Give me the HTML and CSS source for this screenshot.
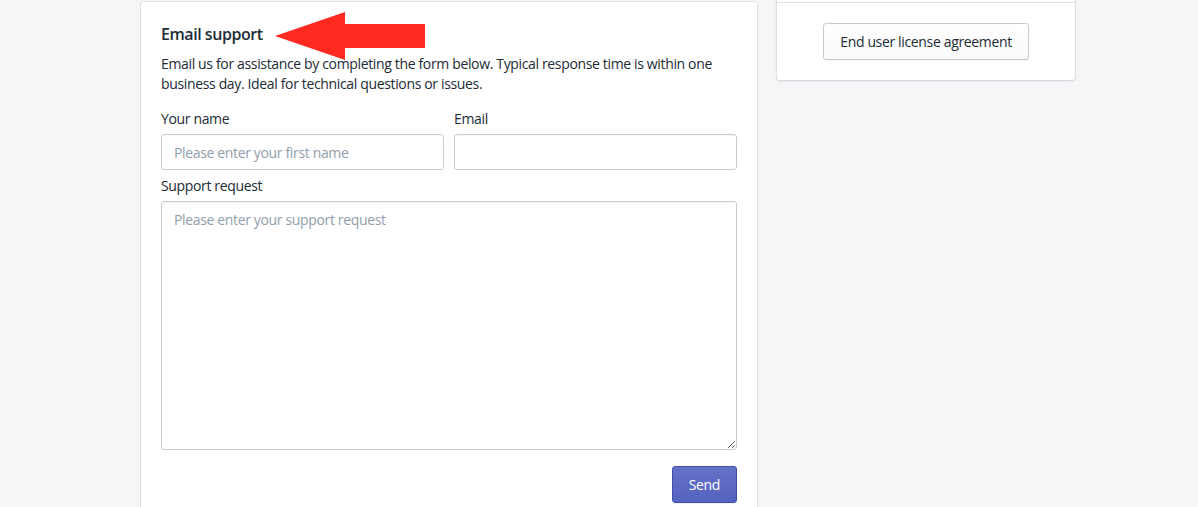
FILE: index.html
```html
<!DOCTYPE html>
<html>
<head>
<meta charset="utf-8">
<link rel="stylesheet" href="styles.css">
</head>
<body>
<div class="page">
  <div class="main-col">
    <section class="card form-card">
      <h2 class="card-title">Email support</h2>
      <p class="desc">Email us for assistance by completing the form below. Typical response time is within one business day. Ideal for technical questions or issues.</p>
      <div class="row">
        <div class="field">
          <label class="label">Your name</label>
          <input class="input" type="text" placeholder="Please enter your first name">
        </div>
        <div class="field">
          <label class="label">Email</label>
          <input class="input" type="text">
        </div>
      </div>
      <div class="field">
        <label class="label">Support request</label>
        <textarea class="textarea" placeholder="Please enter your support request"></textarea>
      </div>
      <div class="actions">
        <button class="btn-primary">Send</button>
      </div>
    </section>
    <svg class="arrow" width="160" height="52" viewBox="0 0 160 52">
      <polygon points="1,24 71,0 71,12 151,12 151,36 71,36 71,48" fill="#ff2a1f"/>
    </svg>
  </div>
  <aside class="side-col">
    <section class="card side-card">
      <div class="side-top"></div>
      <div class="side-body">
        <button class="btn">End user license agreement</button>
      </div>
    </section>
  </aside>
</div>
</body>
</html>
```
FILE: styles.css
```css
* { box-sizing: border-box; }
html, body { margin: 0; padding: 0; }
body {
  background: #f4f6f8;
  font-family: "Segoe UI", "Open Sans", "Noto Sans", sans-serif;
  font-size: 14px;
  line-height: 20px;
  letter-spacing: -0.35px;
  color: #212b36;
  overflow: hidden;
  height: 507px;
}
.page {
  display: flex;
  align-items: flex-start;
  gap: 20px;
  padding-left: 141px;
  padding-top: 2px;
}
.main-col {
  position: relative;
  width: 616px;
  flex: none;
}
.card {
  background: #fff;
  border-radius: 3px;
  box-shadow: 0 0 0 1px rgba(63,63,68,0.07), 0 1px 3px 0 rgba(63,63,68,0.15);
}
.form-card {
  padding: 20px 20px 40px;
}
.card-title {
  margin: 0;
  font-size: 16px;
  font-weight: 600;
  line-height: 24px;
  letter-spacing: -0.45px;
}
.desc {
  margin: 8px 0 0;
  padding-right: 20px;
}
.row {
  display: flex;
  gap: 10px;
  margin-top: 15px;
}
.row .field { flex: 1; }
.field { display: flex; flex-direction: column; }
.label {
  display: block;
  margin-bottom: 5px;
}
.form-card > .field { margin-top: 6px; }
.input, .textarea {
  font: inherit;
  letter-spacing: inherit;
  color: #212b36;
  border: 1px solid #c4cdd5;
  border-radius: 3px;
  background: #fff;
  padding: 7px 12px;
  height: 36px;
  width: 100%;
  box-shadow: inset 0 1px 0 0 rgba(99,115,129,0.05);
  outline: none;
}
.textarea {
  height: 249px;
  padding-top: 8px;
  resize: vertical;
}
.input::placeholder, .textarea::placeholder { color: #919eab; }
.actions {
  display: flex;
  justify-content: flex-end;
  margin-top: 16px;
}
.btn-primary {
  font: inherit;
  letter-spacing: inherit;
  color: #fff;
  background: linear-gradient(180deg, #6371c7, #5563c1);
  border: 1px solid #3f4eae;
  border-radius: 3px;
  height: 37px;
  padding: 0 16px;
  box-shadow: inset 0 1px 0 0 #6774c8, 0 1px 0 0 rgba(22,29,37,0.05);
}
.arrow {
  position: absolute;
  left: 133px;
  top: 10px;
}
.side-col {
  width: 298px;
  flex: none;
  margin-top: -41px;
}
.side-top {
  height: 42px;
  border-bottom: 1px solid #dfe3e8;
}
.side-body {
  display: flex;
  justify-content: center;
  padding: 20px 0;
}
.btn {
  font: inherit;
  letter-spacing: inherit;
  color: #212b36;
  background: linear-gradient(180deg, #fff, #f9fafb);
  border: 1px solid #c4cdd5;
  border-radius: 3px;
  height: 37px;
  padding: 0 16px;
  box-shadow: 0 1px 0 0 rgba(22,29,37,0.05);
}
```
